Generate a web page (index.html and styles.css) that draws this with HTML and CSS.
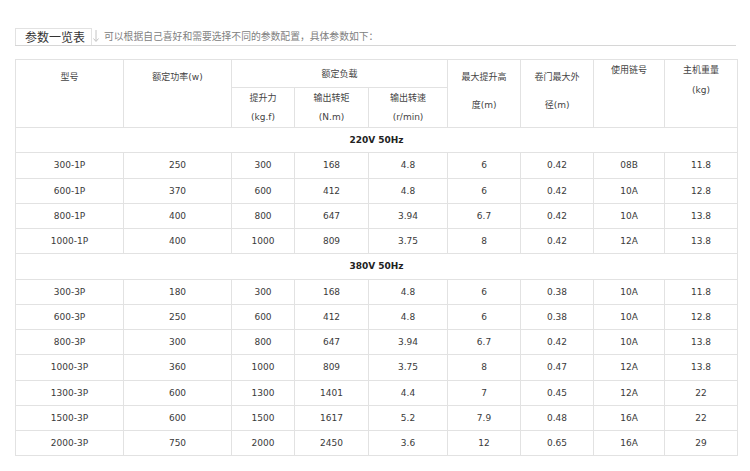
FILE: index.html
```html
<!DOCTYPE html>
<html lang="zh">
<head>
<meta charset="utf-8">
<title>参数一览表</title>
<link rel="stylesheet" href="styles.css">
</head>
<body>
<div class="page">
  <div class="bar">
    <div class="tab">参数一览表</div>
    <svg class="arrow" width="8" height="14" viewBox="0 0 8 14"><path d="M4 1V12M1.5 9.5L4 12.5L6.5 9.5" fill="none" stroke="#c4c4c4" stroke-width="1"/></svg>
    <div class="desc">可以根据自己喜好和需要选择不同的参数配置，具体参数如下：</div>
  </div>
  <table class="spec">
    <colgroup>
      <col class="c108"><col class="c108"><col class="c63"><col class="c74"><col class="c79"><col class="c73"><col class="c73"><col class="c71"><col class="c73">
    </colgroup>
    <thead>
      <tr class="h1">
        <th rowspan="2" class="top">型号</th>
        <th rowspan="2" class="top">额定功率(w)</th>
        <th colspan="3" class="mid">额定负载</th>
        <th rowspan="2" class="top">最大提升高<br>度(m)</th>
        <th rowspan="2" class="top">卷门最大外<br>径(m)</th>
        <th rowspan="2" class="top2">使用链号</th>
        <th rowspan="2" class="top2">主机重量<br>(kg)</th>
      </tr>
      <tr class="h2">
        <th class="sub">提升力<br>(kg.f)</th>
        <th class="sub">输出转矩<br>(N.m)</th>
        <th class="sub">输出转速<br>(r/min)</th>
      </tr>
    </thead>
    <tbody>
      <tr class="sec"><td colspan="9">220V 50Hz</td></tr>
      <tr><td>300-1P</td><td>250</td><td>300</td><td>168</td><td>4.8</td><td>6</td><td>0.42</td><td>08B</td><td>11.8</td></tr>
      <tr><td>600-1P</td><td>370</td><td>600</td><td>412</td><td>4.8</td><td>6</td><td>0.42</td><td>10A</td><td>12.8</td></tr>
      <tr><td>800-1P</td><td>400</td><td>800</td><td>647</td><td>3.94</td><td>6.7</td><td>0.42</td><td>10A</td><td>13.8</td></tr>
      <tr><td>1000-1P</td><td>400</td><td>1000</td><td>809</td><td>3.75</td><td>8</td><td>0.42</td><td>12A</td><td>13.8</td></tr>
      <tr class="sec"><td colspan="9">380V 50Hz</td></tr>
      <tr><td>300-3P</td><td>180</td><td>300</td><td>168</td><td>4.8</td><td>6</td><td>0.38</td><td>10A</td><td>11.8</td></tr>
      <tr><td>600-3P</td><td>250</td><td>600</td><td>412</td><td>4.8</td><td>6</td><td>0.38</td><td>10A</td><td>12.8</td></tr>
      <tr><td>800-3P</td><td>300</td><td>800</td><td>647</td><td>3.94</td><td>6.7</td><td>0.42</td><td>10A</td><td>13.8</td></tr>
      <tr><td>1000-3P</td><td>360</td><td>1000</td><td>809</td><td>3.75</td><td>8</td><td>0.47</td><td>12A</td><td>13.8</td></tr>
      <tr><td>1300-3P</td><td>600</td><td>1300</td><td>1401</td><td>4.4</td><td>7</td><td>0.45</td><td>12A</td><td>22</td></tr>
      <tr><td>1500-3P</td><td>600</td><td>1500</td><td>1617</td><td>5.2</td><td>7.9</td><td>0.48</td><td>16A</td><td>22</td></tr>
      <tr><td>2000-3P</td><td>750</td><td>2000</td><td>2450</td><td>3.6</td><td>12</td><td>0.65</td><td>16A</td><td>29</td></tr>
    </tbody>
  </table>
</div>
</body>
</html>
```

FILE: styles.css
```css
html, body {
  margin: 0;
  padding: 0;
  background: #ffffff;
}

.page {
  padding: 28px 0 0 15px;
  width: 722px;
  font-family: "DejaVu Sans", "Noto Sans CJK SC", sans-serif;
  color: #333333;
}

.bar {
  display: flex;
  align-items: flex-end;
  width: 721px;
  border-bottom: 1px solid #d6d6d6;
}

.tab {
  height: 16px;
  line-height: 16px;
  padding: 0 6px 0 9px;
  border: 1px solid #e2e2e2;
  border-bottom: none;
  font-family: "Noto Sans CJK SC", sans-serif;
  font-size: 12px;
  color: #333333;
}

.arrow {
  display: block;
  margin: 0 0 2px 0;
}

.desc {
  margin-left: 4px;
  padding-bottom: 1px;
  font-family: "Noto Sans CJK SC", sans-serif;
  font-size: 9.8px;
  line-height: 15px;
  color: #808080;
}

.spec {
  margin-top: 13px;
  width: 722px;
  table-layout: fixed;
  border-collapse: collapse;
  border: 1px solid #e2e2e2;
  font-size: 9px;
}

.c108 { width: 108px; }
.c63 { width: 63px; }
.c74 { width: 74px; }
.c79 { width: 79px; }
.c73 { width: 73px; }
.c71 { width: 71px; }

.spec th,
.spec td {
  border: 1px solid #e2e2e2;
  padding: 0;
  text-align: center;
  font-weight: normal;
}

.spec th {
  font-family: "DejaVu Sans", "Noto Sans CJK SC", sans-serif;
  font-size: 9px;
  color: #444444;
}

.h1 { height: 28px; }
.h2 { height: 40px; }

.spec th.top {
  vertical-align: top;
  line-height: 28px;
  padding-top: 3px;
}

.spec th.top2 {
  vertical-align: top;
  line-height: 20px;
}

.spec th.mid {
  vertical-align: middle;
  line-height: 16px;
}

.spec th.sub {
  vertical-align: middle;
  line-height: 19px;
  padding-top: 1px;
}

.spec tbody tr {
  height: 25.25px;
}

.spec td {
  line-height: 14px;
  color: #3a3a3a;
}

.spec tr.sec td {
  font-weight: bold;
  color: #222222;
}
```
